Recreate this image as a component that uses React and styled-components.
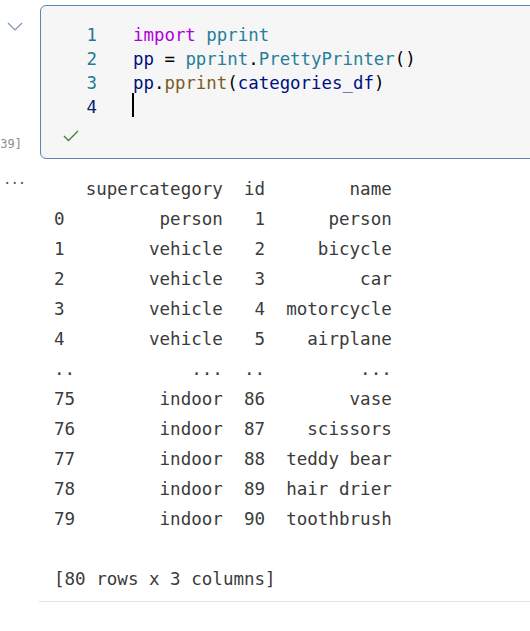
import React from 'react';
import styled, { createGlobalStyle } from 'styled-components';

const Global = createGlobalStyle`
    html, body {
        margin: 0;
        padding: 0;
        background: #ffffff;
        overflow: hidden;
    }
`;

const mono = `"DejaVu Sans Mono", "Liberation Mono", monospace`;

// 셀 한 줄: 왼쪽 거터 + 내용
const CellRow = styled.div`
    display: flex;
    flex-direction: row;
`;

const Gutter = styled.div`
    width: 40px;
    flex-shrink: 0;
    display: flex;
    flex-direction: column;
    justify-content: ${p => p.justify || 'space-between'};
    align-items: ${p => p.align || 'flex-end'};
    box-sizing: border-box;
    padding: ${p => p.pad || '0'};
`;

const Chevron = styled.svg`
    display: block;
    margin-right: 17px;
`;

const ExecCount = styled.div`
    font-family: ${mono};
    font-size: 12px;
    color: #8b8b8b;
    margin-right: 18px;
    white-space: nowrap;
`;

const Editor = styled.div`
    flex: 1;
    margin-top: 5px;
    margin-right: -12px;
    height: 154px;
    box-sizing: border-box;
    border: 1px solid #5b86b5;
    border-radius: 6px;
    background: #f6f6f6;
    padding-top: 17px;
    display: flex;
    flex-direction: column;
`;

const CodeLine = styled.div`
    display: flex;
    height: 24px;
    align-items: center;
    font-family: ${mono};
    font-size: 17.4px;
    white-space: pre;
`;

const LineNo = styled.span`
    width: 56px;
    text-align: right;
    color: ${p => (p.active ? '#0b216f' : '#237893')};
`;

const Code = styled.span`
    margin-left: 36px;
    color: #000000;
`;

const Tok = styled.span`
    color: ${p => p.c};
`;

const Caret = styled.span`
    display: inline-block;
    width: 2px;
    height: 24px;
    background: #000;
    margin-left: -1px;
`;

const Status = styled.div`
    margin-top: 9px;
    padding-left: 22px;
`;

const Output = styled.div`
    flex: 1;
    padding-top: 15px;
    padding-left: 14px;
`;

const Ellipsis = styled.div`
    font-family: ${mono};
    font-size: 14px;
    line-height: 14px;
    color: #555;
    letter-spacing: -1px;
    white-space: nowrap;
`;

const Pre = styled.pre`
    margin: 0;
    font-family: ${mono};
    font-size: 17.55px;
    line-height: 30px;
    color: #3b3b3b;
`;

const Divider = styled.div`
    height: 1px;
    background: #e2e2e2;
    margin-top: 7px;
    margin-left: 39px;
`;

const table = `   supercategory  id        name
0         person   1      person
1        vehicle   2     bicycle
2        vehicle   3         car
3        vehicle   4  motorcycle
4        vehicle   5    airplane
..           ...  ..         ...
75        indoor  86        vase
76        indoor  87    scissors
77        indoor  88  teddy bear
78        indoor  89  hair drier
79        indoor  90  toothbrush

[80 rows x 3 columns]`;

const App = () => {
    return (
        <>
            <Global />
            <CellRow>
                <Gutter pad="22px 0 8px 0">
                    <Chevron width="16" height="9" viewBox="0 0 16 9">
                        <polyline points="1,1 8,8 15,1" fill="none" stroke="#7d93b4" strokeWidth="1.2" />
                    </Chevron>
                    <ExecCount>[39]</ExecCount>
                </Gutter>
                <Editor>
                    <CodeLine>
                        <LineNo>1</LineNo>
                        <Code><Tok c="#af00db">import</Tok> <Tok c="#267f99">pprint</Tok></Code>
                    </CodeLine>
                    <CodeLine>
                        <LineNo>2</LineNo>
                        <Code><Tok c="#001080">pp</Tok> = <Tok c="#267f99">pprint</Tok>.<Tok c="#267f99">PrettyPrinter</Tok>()</Code>
                    </CodeLine>
                    <CodeLine>
                        <LineNo>3</LineNo>
                        <Code><Tok c="#001080">pp</Tok>.<Tok c="#795e26">pprint</Tok>(<Tok c="#001080">categories_df</Tok>)</Code>
                    </CodeLine>
                    <CodeLine>
                        <LineNo active>4</LineNo>
                        <Code><Caret /></Code>
                    </CodeLine>
                    <Status>
                        <svg width="16" height="12" viewBox="0 0 16 12">
                            <polyline points="1,6 5.5,10.5 15,1" fill="none" stroke="#388a34" strokeWidth="1.4" />
                        </svg>
                    </Status>
                </Editor>
            </CellRow>
            <CellRow>
                <Gutter pad="17px 0 0 3px" justify="flex-start" align="flex-start">
                    <Ellipsis>···</Ellipsis>
                </Gutter>
                <Output>
                    <Pre>{table}</Pre>
                </Output>
            </CellRow>
            <Divider />
        </>
    );
};

export default App;
